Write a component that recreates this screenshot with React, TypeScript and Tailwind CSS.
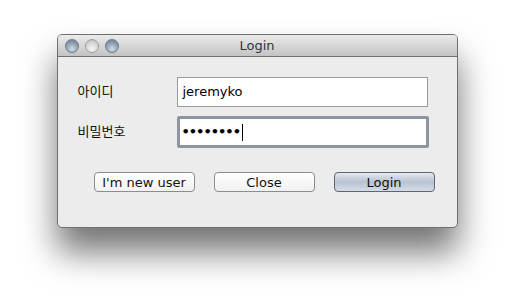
import React from 'react';

const font = { fontFamily: '"DejaVu Sans", "Noto Sans CJK KR", sans-serif' };

function Light({ active }: { active?: boolean }) {
  return (
    <span
      className={`block w-[14px] h-[14px] rounded-full border ${
        active
          ? 'border-[#6f7b87] bg-[radial-gradient(circle_at_50%_75%,#d2dce6_0%,#95a5b6_50%,#65768a_100%)]'
          : 'border-[#9d9d9d] bg-[radial-gradient(circle_at_50%_75%,#f7f7f7_0%,#d8d8d8_55%,#b5b5b5_100%)]'
      }`}
    />
  );
}

function Button({ label, primary }: { label: string; primary?: boolean }) {
  return (
    <button
      className={`w-[101px] h-[20px] rounded-[4px] border text-[13px] leading-none text-[#111] ${
        primary
          ? 'border-[#5c6670] bg-gradient-to-b from-[#e3e9f0] via-[#b7c3d0] to-[#d4dde7]'
          : 'border-[#8c8c8c] bg-gradient-to-b from-white to-[#f1f1f1]'
      }`}
    >
      {label}
    </button>
  );
}

export default function App() {
  return (
    <div className="w-[514px] h-[307px] bg-white flex justify-center pt-[34px]" style={font}>
      <div className="w-[401px] h-[194px] rounded-[5px] border border-[#6f6f6f] bg-[#ececec] overflow-hidden shadow-[0_24px_34px_rgba(0,0,0,0.55)] flex flex-col">
        <div className="h-[22px] bg-gradient-to-b from-[#ebebeb] to-[#c3c3c3] border-b border-[#6f6f6f] relative flex items-center px-[7px] gap-[6px]">
          <Light active />
          <Light />
          <Light active />
          <span className="absolute inset-0 flex items-center justify-center text-[13px] text-[#333]">Login</span>
        </div>
        <div className="flex-1 flex flex-col pl-[20px] pt-[20px]">
          <div className="flex items-center h-[30px]">
            <span className="w-[99px] text-[13px] text-[#111]">아이디</span>
            <div className="w-[251px] h-[30px] bg-white border border-[#9b9b9b] flex items-center px-[5px] text-[13px] text-black">
              jeremyko
            </div>
          </div>
          <div className="flex items-center h-[32px] mt-[9px]">
            <span className="w-[99px] text-[13px] text-[#111]">비밀번호</span>
            <div className="w-[252px] h-[32px] bg-white border-[3px] border-[#8d969f] rounded-[2px] flex items-center px-[2px] text-[13px] font-bold text-black tracking-[-1px]">
              ••••••••<span className="w-px h-[17px] bg-black ml-[2px]" />
            </div>
          </div>
          <div className="flex gap-[19px] mt-[24px] ml-[16px]">
            <Button label="I'm new user" />
            <Button label="Close" />
            <Button label="Login" primary />
          </div>
        </div>
      </div>
    </div>
  );
}
